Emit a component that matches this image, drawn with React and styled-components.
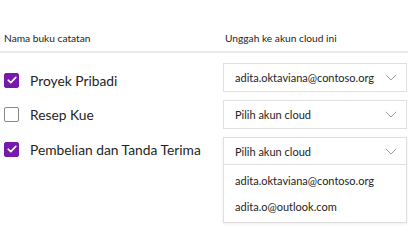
import React from 'react';
import styled, { createGlobalStyle } from 'styled-components';

const GlobalStyle = createGlobalStyle`
  html, body {
    margin: 0;
    padding: 0;
    background: #ffffff;
  }
  body {
    font-family: Lato, "Open Sans", sans-serif;
    color: #252424;
  }
`;

const Page = styled.div`
  width: 408px;
  height: 250px;
  overflow: hidden;
`;

const HeaderRow = styled.div`
  display: grid;
  grid-template-columns: 221px 1fr;
  padding: 31px 0 6px 4px;
  border-bottom: 2px solid #ebebeb;
`;

const HeaderCell = styled.div`
  font-size: 10.2px;
  line-height: 14px;
  color: #252424;
`;

const Body = styled.div`
  display: grid;
  grid-template-columns: 223px 1fr;
`;

const NotebookList = styled.div`
  display: flex;
  flex-direction: column;
  padding: 10px 0 0 4px;
`;

const NotebookRow = styled.label`
  display: flex;
  align-items: center;
  gap: 11px;
  height: 34.5px;
`;

const Box = styled.span`
  box-sizing: border-box;
  width: 15px;
  height: 15px;
  border-radius: 2px;
  display: flex;
  align-items: center;
  justify-content: center;
  background: ${p => (p.$checked ? '#7719aa' : '#ffffff')};
  border: 1px solid ${p => (p.$checked ? '#7719aa' : '#8a8886')};
`;

const NotebookName = styled.span`
  font-size: 13.8px;
  color: #252424;
  white-space: nowrap;
`;

const AccountList = styled.div`
  display: flex;
  flex-direction: column;
  gap: 8px;
  padding: 10px 1px 0 0;
`;

const SelectWrap = styled.div`
  box-sizing: border-box;
  border: 1px solid #e1dfdd;
  background: #ffffff;
  box-shadow: ${p => (p.$open ? '0 1px 3px rgba(0,0,0,0.08)' : 'none')};
`;

const SelectHead = styled.div`
  display: flex;
  align-items: center;
  justify-content: space-between;
  height: ${p => (p.$open ? 26 : 27)}px;
  padding: 0 9px 0 11px;
  font-size: 11px;
  color: #252424;
  border-bottom: ${p => (p.$open ? '1px solid #e1dfdd' : 'none')};
`;

const Menu = styled.div`
  padding: 2px 0 3px;
`;

const MenuItem = styled.div`
  height: 26px;
  display: flex;
  align-items: center;
  padding: 0 11px;
  font-size: 11px;
  color: #252424;
`;

const Check = () => (
  <svg width="10" height="8" viewBox="0 0 10 8">
    <path d="M1.2 4.2 L3.8 6.6 L8.8 1.4" fill="none" stroke="#ffffff" strokeWidth="1.6" strokeLinecap="round" strokeLinejoin="round" />
  </svg>
);

const Chevron = () => (
  <svg width="12" height="7" viewBox="0 0 12 7">
    <path d="M0.8 0.8 L6 6 L11.2 0.8" fill="none" stroke="#a19f9d" strokeWidth="1" />
  </svg>
);

const notebooks = [
  { name: 'Proyek Pribadi', checked: true },
  { name: 'Resep Kue', checked: false },
  { name: 'Pembelian dan Tanda Terima', checked: true },
];

const selects = [
  { value: 'adita.oktaviana@contoso.org', open: false },
  { value: 'Pilih akun cloud', open: false },
  { value: 'Pilih akun cloud', open: true },
];

const accounts = ['adita.oktaviana@contoso.org', 'adita.o@outlook.com'];

const App = () => {
  return (
    <>
      <GlobalStyle />
      <Page>
        <HeaderRow>
          <HeaderCell>Nama buku catatan</HeaderCell>
          <HeaderCell>Unggah ke akun cloud ini</HeaderCell>
        </HeaderRow>
        <Body>
          <NotebookList>
            {notebooks.map(nb => (
              <NotebookRow key={nb.name}>
                <Box $checked={nb.checked}>{nb.checked && <Check />}</Box>
                <NotebookName>{nb.name}</NotebookName>
              </NotebookRow>
            ))}
          </NotebookList>
          <AccountList>
            {selects.map((s, i) => (
              <SelectWrap key={i} $open={s.open}>
                <SelectHead $open={s.open}>
                  <span>{s.value}</span>
                  <Chevron />
                </SelectHead>
                {s.open && (
                  <Menu>
                    {accounts.map(a => (
                      <MenuItem key={a}>{a}</MenuItem>
                    ))}
                  </Menu>
                )}
              </SelectWrap>
            ))}
          </AccountList>
        </Body>
      </Page>
    </>
  );
};

export default App;
